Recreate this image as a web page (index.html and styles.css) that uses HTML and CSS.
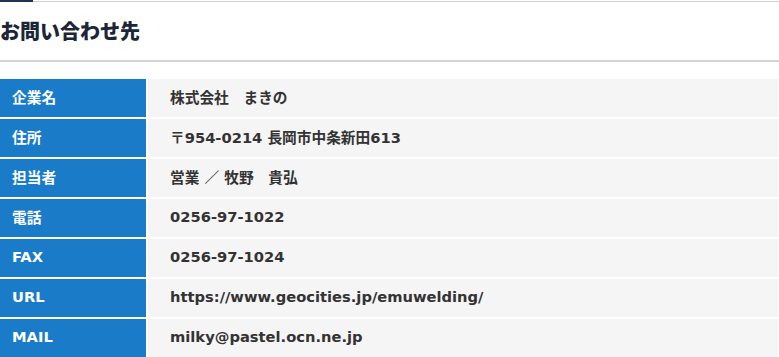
FILE: index.html
```html
<!DOCTYPE html>
<html lang="ja">
<head>
<meta charset="utf-8">
<link rel="stylesheet" href="styles.css">
</head>
<body>
<div class="section">
  <h2 class="heading">お問い合わせ先</h2>
  <table class="info">
    <tr><th>企業名</th><td>株式会社　まきの</td></tr>
    <tr><th>住所</th><td>〒954-0214 長岡市中条新田613</td></tr>
    <tr><th>担当者</th><td>営業 ／ 牧野　貴弘</td></tr>
    <tr><th>電話</th><td>0256-97-1022</td></tr>
    <tr><th>FAX</th><td>0256-97-1024</td></tr>
    <tr><th>URL</th><td>https://www.geocities.jp/emuwelding/</td></tr>
    <tr><th>MAIL</th><td>milky@pastel.ocn.ne.jp</td></tr>
  </table>
</div>
</body>
</html>
```
FILE: styles.css
```css
html, body {
  margin: 0;
  padding: 0;
  background: #fff;
}
body {
  font-family: "DejaVu Sans", "Noto Sans CJK JP", sans-serif;
}
.section {
  padding-top: 1px;
}
.heading {
  position: relative;
  margin: 0;
  border-top: 1px solid #cfcfcf;
  border-bottom: 2px solid #d4d4d4;
  padding: 15px 0 0 0;
  box-sizing: border-box;
  height: 61px;
  font-family: "Noto Sans CJK JP", sans-serif;
  font-size: 20px;
  font-weight: 900;
  color: #1c2636;
  line-height: 28px;
}
.heading::before {
  content: "";
  position: absolute;
  left: 0;
  top: -2px;
  width: 33px;
  height: 2px;
  background: #1c3350;
}
.info {
  margin-top: 17px;
  width: 100%;
  border-collapse: collapse;
  font-size: 14.7px;
  font-weight: bold;
}
.info th, .info td {
  height: 35px;
  padding: 0 0 3px 0;
  border: 2px solid #fff;
  border-left: 0;
  vertical-align: middle;
  text-align: left;
}
.info tr:first-child th, .info tr:first-child td {
  border-top: 0;
}
.info th {
  width: 134px;
  background: #1a7bc9;
  color: #fff;
  padding-left: 12px;
}
.info td {
  background: #f5f5f5;
  color: #333;
  padding-left: 22px;
  border-right: 1px solid #fff;
}
```
